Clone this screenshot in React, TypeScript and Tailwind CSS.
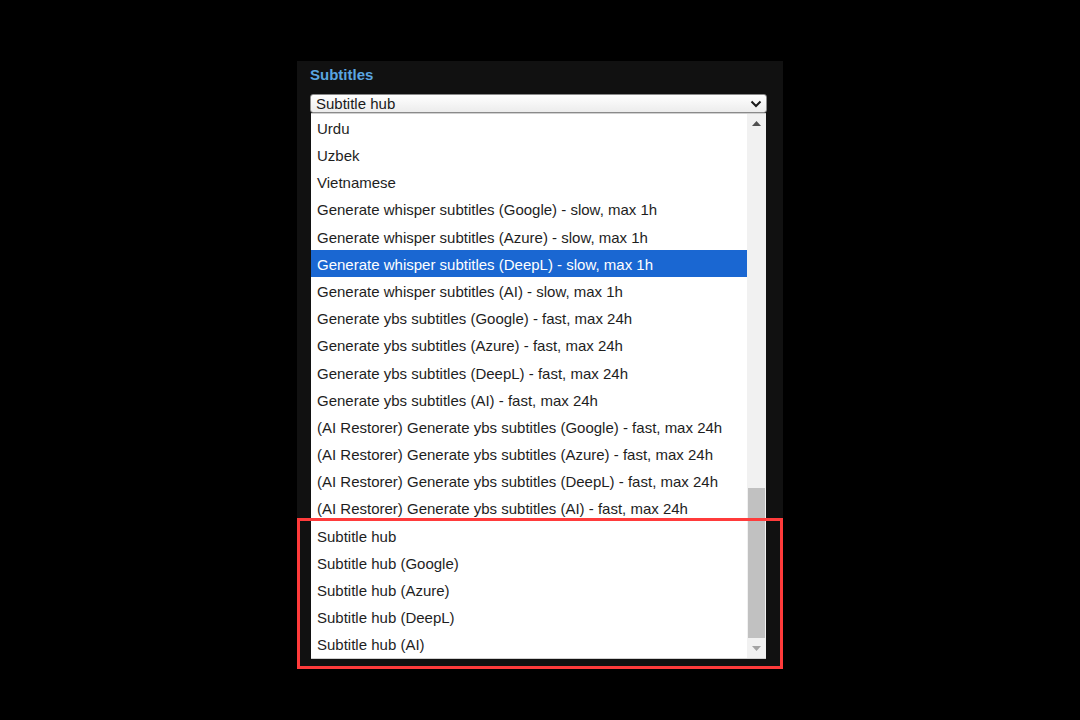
import React from 'react';

const options = [
    'Urdu',
    'Uzbek',
    'Vietnamese',
    'Generate whisper subtitles (Google) - slow, max 1h',
    'Generate whisper subtitles (Azure) - slow, max 1h',
    'Generate whisper subtitles (DeepL) - slow, max 1h',
    'Generate whisper subtitles (AI) - slow, max 1h',
    'Generate ybs subtitles (Google) - fast, max 24h',
    'Generate ybs subtitles (Azure) - fast, max 24h',
    'Generate ybs subtitles (DeepL) - fast, max 24h',
    'Generate ybs subtitles (AI) - fast, max 24h',
    '(AI Restorer) Generate ybs subtitles (Google) - fast, max 24h',
    '(AI Restorer) Generate ybs subtitles (Azure) - fast, max 24h',
    '(AI Restorer) Generate ybs subtitles (DeepL) - fast, max 24h',
    '(AI Restorer) Generate ybs subtitles (AI) - fast, max 24h',
    'Subtitle hub',
    'Subtitle hub (Google)',
    'Subtitle hub (Azure)',
    'Subtitle hub (DeepL)',
    'Subtitle hub (AI)',
];

const SELECTED = 5;

export default function App() {
    return (
        <div
            className="w-[1080px] h-[720px] bg-black flex justify-center pt-[61px]"
            style={{ fontFamily: '"Liberation Sans", Arial, sans-serif' }}
        >
            <div className="relative w-[486px] h-[608px] bg-[#111111] pl-[13px] pr-[16px]">
                {/* Header */}
                <h2 className="h-[33px] pt-[4px] text-[15px] font-bold text-[#5aa5e0] leading-[20px]">
                    Subtitles
                </h2>

                {/* Select */}
                <div className="h-[19px] flex items-center justify-between rounded-[3px] border border-[#8a8a8a] bg-gradient-to-b from-white to-[#ececec] pl-[5px] pr-[3px]">
                    <span className="text-[15px] leading-[17px] text-[#1a1a1a]">Subtitle hub</span>
                    <svg width="12" height="8" viewBox="0 0 12 8" className="mr-[1px]">
                        <path d="M1.5 1.5 L6 6 L10.5 1.5" fill="none" stroke="#1a1a1a" strokeWidth="2" />
                    </svg>
                </div>

                {/* Dropdown list */}
                <div className="ml-[1px] mr-[1px] flex h-[546px] border-y border-[#d0d0d0] bg-white">
                    <div className="flex-1">
                        {options.map((opt, i) => (
                            <div
                                key={opt}
                                className={
                                    i === SELECTED
                                        ? 'h-[27.2px] flex items-center pl-[6px] pt-[3px] text-[15px] bg-[#1a67d2] text-white'
                                        : 'h-[27.2px] flex items-center pl-[6px] pt-[3px] text-[15px] text-[#1e1e1e]'
                                }
                            >
                                {opt}
                            </div>
                        ))}
                    </div>

                    {/* Scrollbar */}
                    <div className="w-[19px] bg-[#f1f1f1] flex flex-col items-center">
                        <div className="h-[18px] flex items-center justify-center">
                            <svg width="9" height="5" viewBox="0 0 9 5">
                                <path d="M0 5 L4.5 0 L9 5 Z" fill="#505050" />
                            </svg>
                        </div>
                        <div className="flex-1 w-full flex flex-col justify-end px-[1px]">
                            <div className="h-[150px] w-full bg-[#c1c1c1]" />
                        </div>
                        <div className="h-[20px] flex items-center justify-center">
                            <svg width="9" height="5" viewBox="0 0 9 5">
                                <path d="M0 0 L4.5 5 L9 0 Z" fill="#a3a3a3" />
                            </svg>
                        </div>
                    </div>
                </div>

                {/* Highlight annotation */}
                <div className="absolute left-0 right-0 top-[457px] h-[151px] border-[3px] border-[#ff3b3b]" />
            </div>
        </div>
    );
}
